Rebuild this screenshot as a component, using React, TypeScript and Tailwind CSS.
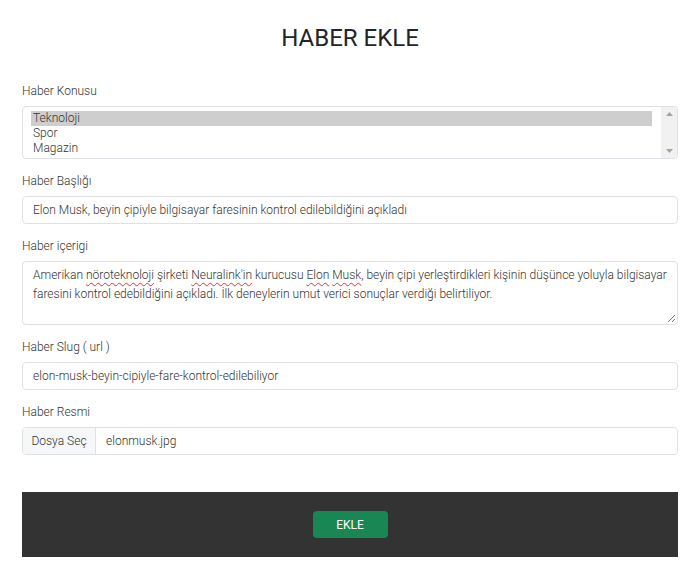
import React from "react";

const Label = ({ children }: { children: React.ReactNode }) => (
  <div className="h-[18px] leading-[18px] text-[12px] text-[#333] mb-[6px]">{children}</div>
);

const Squiggle = ({ children }: { children: React.ReactNode }) => (
  <span className="underline decoration-wavy decoration-[#e0342c] decoration-1 underline-offset-[3px]">{children}</span>
);

export default function App() {
  return (
    <div className="min-h-screen bg-white font-['Roboto',sans-serif] font-light text-[#212529]">
      <div className="pl-[22px] pr-[21px] pt-[23px] pb-[25px] w-[699px]">
        <h1 className="text-center text-[24px] leading-[30px] font-normal text-[#212529] mb-[29px]">HABER EKLE</h1>

        {/* Haber Konusu */}
        <div>
          <Label>Haber Konusu</Label>
          <div className="flex h-[53px] border border-[#dee2e6] rounded-[4px] bg-white overflow-hidden">
            <div className="flex-1 pl-[8px] pr-[9px] pt-[4px] text-[12px] leading-[15px] text-[#333]">
              <div className="bg-[#cecece] px-[2px]">Teknoloji</div>
              <div className="px-[2px]">Spor</div>
              <div className="px-[2px]">Magazin</div>
            </div>
            <div className="w-[16px] bg-[#f1f1f1] flex flex-col items-center justify-between py-[5px]">
              <svg width="7" height="4" viewBox="0 0 7 4"><path d="M3.5 0L7 4H0z" fill="#a3a3a3" /></svg>
              <svg width="7" height="4" viewBox="0 0 7 4"><path d="M0 0h7L3.5 4z" fill="#a3a3a3" /></svg>
            </div>
          </div>
        </div>

        {/* Haber Başlığı */}
        <div className="mt-[13px]">
          <Label>Haber Başlığı</Label>
          <div className="h-[28px] border border-[#dee2e6] rounded-[4px] px-[10px] flex items-center text-[12px] text-[#333]">
            Elon Musk, beyin çipiyle bilgisayar faresinin kontrol edilebildiğini açıkladı
          </div>
        </div>

        {/* Haber içerigi */}
        <div className="mt-[13px]">
          <Label>Haber içerigi</Label>
          <div className="relative h-[64px] border border-[#dee2e6] rounded-[4px] px-[10px] pt-[4px] text-[12px] leading-[19px] text-[#333]">
            <div className="whitespace-nowrap">
              Amerikan <Squiggle>nöroteknoloji</Squiggle> şirketi <Squiggle>Neuralink'in</Squiggle> kurucusu <Squiggle>Elon</Squiggle>{" "}
              <Squiggle>Musk</Squiggle>, beyin çipi yerleştirdikleri kişinin düşünce yoluyla bilgisayar
            </div>
            <div className="whitespace-nowrap">
              faresini kontrol edebildiğini açıkladı. İlk deneylerin umut verici sonuçlar verdiği belirtiliyor.
            </div>
            <svg className="absolute right-[1px] bottom-[1px]" width="9" height="9" viewBox="0 0 9 9">
              <path d="M8 1L1 8M8 5L5 8" stroke="#777" strokeWidth="1" />
            </svg>
          </div>
        </div>

        {/* Haber Slug */}
        <div className="mt-[13px]">
          <Label>Haber Slug ( url )</Label>
          <div className="h-[28px] border border-[#dee2e6] rounded-[4px] px-[10px] flex items-center text-[12px] text-[#333]">
            elon-musk-beyin-cipiyle-fare-kontrol-edilebiliyor
          </div>
        </div>

        {/* Haber Resmi */}
        <div className="mt-[13px]">
          <Label>Haber Resmi</Label>
          <div className="h-[28px] border border-[#dee2e6] rounded-[4px] flex items-stretch text-[12px] text-[#333] overflow-hidden">
            <div className="w-[73px] bg-[#f6f7f9] border-r border-[#dee2e6] flex items-center justify-center">Dosya Seç</div>
            <div className="flex items-center pl-[10px]">elonmusk.jpg</div>
          </div>
        </div>

        {/* Footer */}
        <div className="mt-[37px] h-[65px] bg-[#333333] flex items-center justify-center">
          <button className="w-[75px] h-[27px] rounded-[4px] bg-[#198754] text-white text-[12px] font-normal">EKLE</button>
        </div>
      </div>
    </div>
  );
}
